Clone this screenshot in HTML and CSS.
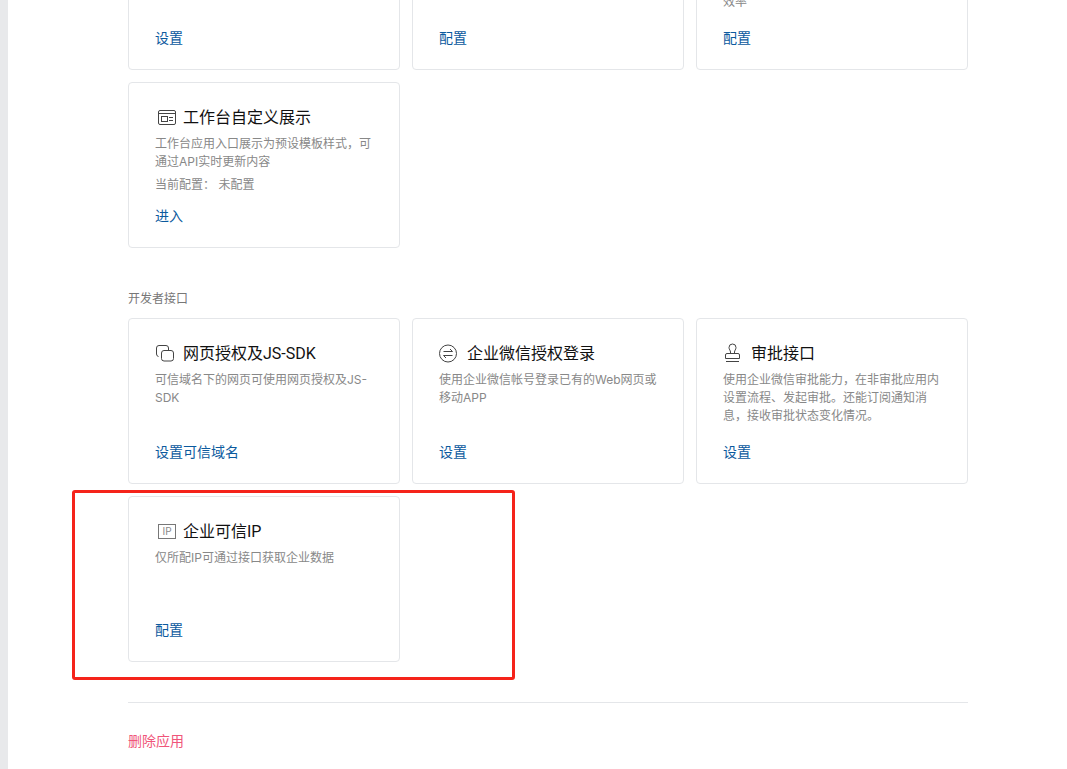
FILE: index.html
```html
<!DOCTYPE html>
<html lang="zh-CN">
<head>
<meta charset="utf-8">
<title>应用管理</title>
<link rel="stylesheet" href="styles.css">
</head>
<body>
<div class="page">
  <aside class="strip"></aside>
  <main class="content">
    <section class="grid">
      <article class="card"><div class="title"></div><p class="desc"></p><a class="link">设置</a></article>
      <article class="card"><div class="title"></div><p class="desc"></p><a class="link">配置</a></article>
      <article class="card"><div class="title"></div><p class="desc"><br><br>效率</p><a class="link">配置</a></article>
      <article class="card">
        <div class="title">
          <svg class="icon" viewBox="0 0 28 20"><rect x="3.5" y="3.5" width="17" height="14" rx="1.5"/><path d="M3.5 6.5H20.5"/><rect x="6.5" y="9.5" width="6" height="5"/><path d="M14 10.5H18M14 13.5H18"/></svg>
          <h3>工作台自定义展示</h3>
        </div>
        <p class="desc">工作台应用入口展示为预设模板样式，可通过API实时更新内容</p>
        <p class="meta">当前配置： <span>未配置</span></p>
        <a class="link">进入</a>
      </article>
    </section>

    <h2 class="section-label">开发者接口</h2>
    <section class="grid">
      <article class="card">
        <div class="title">
          <svg class="icon" viewBox="0 0 28 20"><path d="M3.5 13.5A2.5 2.5 0 0 1 1.5 11V5A2.5 2.5 0 0 1 4 2.5H11A2.5 2.5 0 0 1 13.5 5V7.5"/><path d="M6.5 12V10A2.5 2.5 0 0 1 9 7.5H16A2.5 2.5 0 0 1 18.5 10V15.500A2.500 2.500 0 0 1 16 18H9A2.500 2.500 0 0 1 6.500 15.500V12"/></svg>
          <h3>网页授权及JS-SDK</h3>
        </div>
        <p class="desc">可信域名下的网页可使用网页授权及JS-SDK</p>
        <a class="link">设置可信域名</a>
      </article>
      <article class="card">
        <div class="title">
          <svg class="icon" viewBox="0 0 28 20"><circle cx="9" cy="10.500" r="8.500"/><path d="M4.500 8.500H13.500L11 6M13.500 12.500H4.500L7 15"/></svg>
          <h3>企业微信授权登录</h3>
        </div>
        <p class="desc">使用企业微信帐号登录已有的Web网页或移动APP</p>
        <a class="link">设置</a>
      </article>
      <article class="card">
        <div class="title">
          <svg class="icon" viewBox="0 0 28 20"><path d="M7.500 10.500V9C7.500 7.500 6 6.500 6 4.500A3.500 3.500 0 0 1 13 4.500C13 6.500 11.500 7.500 11.500 9V10.500"/><path d="M2.500 15.500V12A1.500 1.500 0 0 1 4 10.500H15A1.500 1.500 0 0 1 16.500 12V15.500Z"/><path d="M3 18.500H16"/></svg>
          <h3>审批接口</h3>
        </div>
        <p class="desc">使用企业微信审批能力，在非审批应用内设置流程、发起审批。还能订阅通知消息，接收审批状态变化情况。</p>
        <a class="link">设置</a>
      </article>
      <article class="card">
        <div class="title">
          <span class="icon-slot"><span class="ip-badge">IP</span></span>
          <h3>企业可信IP</h3>
        </div>
        <p class="desc">仅所配IP可通过接口获取企业数据</p>
        <a class="link">配置</a>
      </article>
    </section>

    <hr class="divider">
    <a class="delete">删除应用</a>
  </main>
</div>
<div class="highlight"></div>
</body>
</html>
```
FILE: styles.css
```css
* { box-sizing: border-box; }

html, body {
  margin: 0;
  height: 100%;
  overflow: hidden;
  background: #fff;
}

body {
  position: relative;
  font-family: Inter, "Noto Sans CJK SC", sans-serif;
  font-size: 12px;
  color: #888;
}

.page {
  display: flex;
  height: 769px;
}

.strip {
  flex: 0 0 8px;
  background: #e8e9eb;
}

.content {
  width: 840px;
  margin: -96px 0 0 120px;
}

.grid {
  display: grid;
  grid-template-columns: repeat(3, 272px);
  grid-auto-rows: 166px;
  gap: 12px;
}

.card {
  display: flex;
  flex-direction: column;
  padding: 23px 26px 21px;
  border: 1px solid #e4e6e9;
  border-radius: 4px;
  background: #fff;
}

.title {
  display: flex;
  align-items: center;
  height: 22px;
}

.title h3 {
  margin: 0;
  padding-top: 2px;
  font-family: Roboto, "Noto Sans CJK SC", sans-serif;
  font-size: 16px;
  font-weight: 400;
  line-height: 22px;
  color: #111;
}

.icon {
  flex: 0 0 28px;
  width: 28px;
  height: 20px;
  fill: none;
  stroke: #444;
  stroke-width: 1;
}

.icon-slot {
  flex: 0 0 28px;
  display: flex;
}

.ip-badge {
  display: block;
  width: 18px;
  height: 15px;
  margin-left: 3px;
  border: 1px solid #777;
  font-size: 10px;
  line-height: 13px;
  text-align: center;
  color: #888;
}

.desc {
  margin: 7px 0 0;
  line-height: 18px;
  color: #888;
}

.meta {
  margin: 5px 0 0;
  line-height: 18px;
  color: #888;
}

.link {
  margin-top: auto;
  font-size: 14px;
  line-height: 20px;
  color: #0b5a9e;
}

.section-label {
  margin: 42px 0 10px;
  font-size: 12px;
  font-weight: 400;
  line-height: 18px;
  color: #777;
}

.divider {
  margin: 40px 0 0;
  border: 0;
  border-top: 1px solid #e4e6e9;
}

.delete {
  display: block;
  margin-top: 28px;
  font-size: 14px;
  line-height: 20px;
  color: #f0557a;
}

.highlight {
  position: absolute;
  left: 72px;
  top: 490px;
  width: 443px;
  height: 190px;
  border: 3px solid #f5231a;
  border-radius: 3px;
}
```
